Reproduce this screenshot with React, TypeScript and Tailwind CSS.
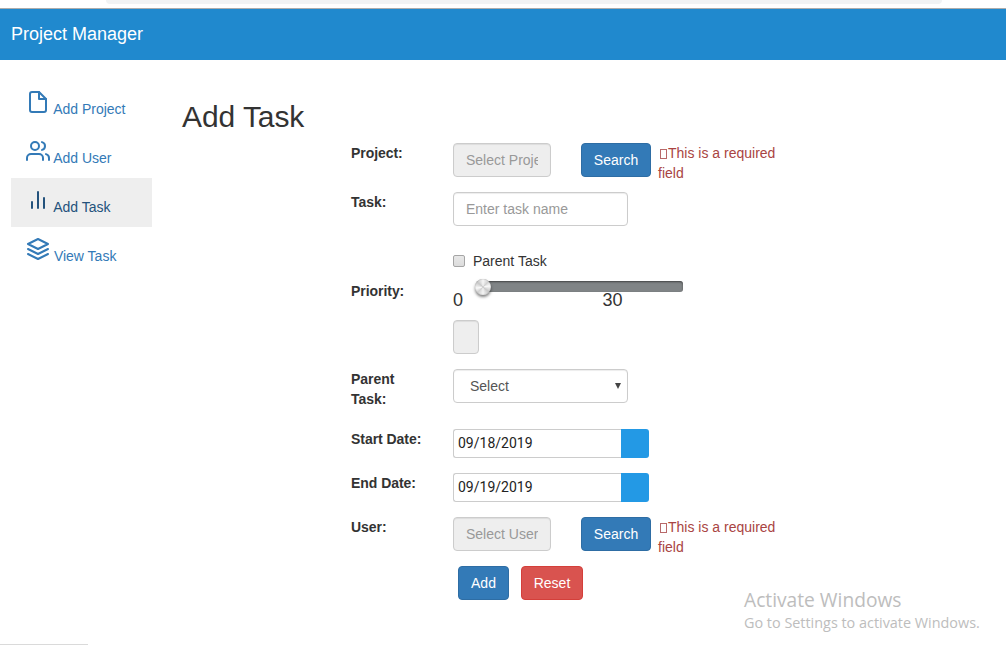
import React from 'react';

const inputBase =
  'block h-[34px] rounded-[4px] border border-[#cccccc] px-3 py-1.5 text-[14px] leading-5 text-[#555555] placeholder:text-[#999999] placeholder:opacity-100 shadow-[inset_0_1px_1px_rgba(0,0,0,0.075)] outline-none';
const buttonBase = 'h-[34px] rounded-[4px] border text-[14px] leading-5 text-white';

function Icon({ children }: { children: React.ReactNode }) {
  return (
    <svg
      className="inline h-6 w-6 align-baseline"
      viewBox="0 0 24 24"
      fill="none"
      stroke="currentColor"
      strokeWidth="2"
      strokeLinecap="round"
      strokeLinejoin="round"
    >
      {children}
    </svg>
  );
}

function NavItem({ icon, label, active }: { icon: React.ReactNode; label: string; active?: boolean }) {
  return (
    <li>
      <a
        className={
          active
            ? 'block h-[49px] bg-[#eeeeee] px-[15px] py-[10px] text-[#23527c]'
            : 'block h-[49px] px-[15px] py-[10px] text-[#337ab7]'
        }
      >
        <Icon>{icon}</Icon> {label}
      </a>
    </li>
  );
}

function Row({ label, className, children }: { label: string; className: string; children: React.ReactNode }) {
  return (
    <div className={`flex items-start ${className}`}>
      <label className="mr-[30px] w-[72px] shrink-0 font-bold tracking-[-0.05px]">{label}</label>
      {children}
    </div>
  );
}

function SearchField({ placeholder }: { placeholder: string }) {
  return (
    <>
      <input disabled placeholder={placeholder} className={`${inputBase} w-[98px] bg-[#eeeeee]`} />
      <button className={`${buttonBase} ml-[30px] w-[70px] border-[#2e6da4] bg-[#337ab7]`}>Search</button>
      <p className="ml-[7px] w-[130px] text-[#a94442]">
        <span className="-mb-px ml-[2px] mr-px inline-block h-[10px] w-[7px] border border-[#b8696a]" />
        This is a required field
      </p>
    </>
  );
}

function DateField({ value }: { value: string }) {
  return (
    <div className="flex h-[29px] w-[196px]">
      <input
        defaultValue={value}
        className="h-[29px] w-[168px] rounded-l-[3px] border border-r-0 border-[#cccccc] px-1 pb-px font-[Roboto,sans-serif] text-[14px] text-[#222222] outline-none"
      />
      <button className="h-[29px] w-7 rounded-r-[3px] bg-[#2399e5]" />
    </div>
  );
}

export default function App() {
  return (
    <div className="relative h-[645px] w-full overflow-hidden bg-white font-['Liberation_Sans',Arial,sans-serif] text-[14px] leading-5 text-[#333333]">
      <div className="h-[9px] border-b border-[#acacac]">
        <div className="ml-[106px] h-1 w-[836px] rounded-b-[12px] bg-[#f1f3f4]" />
      </div>
      <header className="flex h-[51px] items-center bg-[#2089ce] pb-[2px] pl-[11px] text-[18px] text-white">
        Project Manager
      </header>

      <div className="flex">
        <nav className="w-[152px] shrink-0 pl-[11px] pt-5">
          <ul>
            <NavItem
              label="Add Project"
              icon={
                <>
                  <path d="M13 2H6a2 2 0 0 0-2 2v16a2 2 0 0 0 2 2h12a2 2 0 0 0 2-2V9z" />
                  <path d="M13 2v7h7" />
                </>
              }
            />
            <NavItem
              label="Add User"
              icon={
                <>
                  <path d="M17 21v-2a4 4 0 0 0-4-4H5a4 4 0 0 0-4 4v2" />
                  <circle cx="9" cy="7" r="4" />
                  <path d="M23 21v-2a4 4 0 0 0-3-3.87M16 3.13a4 4 0 0 1 0 7.75" />
                </>
              }
            />
            <NavItem active label="Add Task" icon={<path d="M18 20V10M12 20V4M6 20v-6" />} />
            <NavItem
              label="View Task"
              icon={<path d="M12 2 2 7l10 5 10-5zM2 17l10 5 10-5M2 12l10 5 10-5" />}
            />
          </ul>
        </nav>

        <main className="pl-[30px] pt-10">
          <h1 className="h-[33px] text-[30px] leading-[33px] tracking-[-0.07px]">Add Task</h1>
          <form className="pl-[169px] pt-[10px]">
            <Row label="Project:" className="h-[49px]">
              <SearchField placeholder="Select Project" />
            </Row>
            <Row label="Task:" className="h-[59px]">
              <input placeholder="Enter task name" className={`${inputBase} w-[175px]`} />
            </Row>
            <div className="flex h-[30px] pl-[102px]">
              <span className="mr-2 mt-1 h-3 w-3 rounded-[2px] border border-[#a5a5a5] bg-linear-to-b from-[#e8e8e8] to-[#dcdcdc]" />
              Parent Task
            </div>
            <Row label="Priority:" className="h-[88px]">
              <div className="w-[230px]">
                <div className="ml-[24px] h-[11px] w-[206px] rounded-[3px] bg-[#808486] shadow-[inset_0_1px_2px_rgba(0,0,0,0.5)]">
                  <div className="relative -left-[2px] -top-[2px] h-4 w-4 rounded-full bg-[conic-gradient(#f6f6f6,#d2d2d2_45deg,#fafafa_80deg,#c8c8c8_130deg,#f4f4f4_180deg,#d2d2d2_225deg,#fafafa_260deg,#c8c8c8_310deg,#f6f6f6)] shadow-[inset_0_0_1px_rgba(0,0,0,0.45),0_2px_3px_rgba(0,0,0,0.5)]" />
                </div>
                <div className="flex h-[28px] text-[18px] leading-[17px]">
                  <span className="w-[149.5px]">0</span>
                  <span>30</span>
                </div>
                <input disabled className={`${inputBase} w-[26px] bg-[#eeeeee]`} />
              </div>
            </Row>
            <Row label="Parent Task:" className="h-[60px]">
              <div className="flex h-[34px] w-[175px] items-center justify-between rounded-[4px] border border-[#cccccc] pl-4 pr-[6px] text-[#555555] shadow-[inset_0_1px_1px_rgba(0,0,0,0.075)]">
                Select
                <svg className="h-[6px] w-[6px]" viewBox="0 0 6 6">
                  <path d="M0 0h6L3 6z" fill="#444444" />
                </svg>
              </div>
            </Row>
            <Row label="Start Date:" className="h-[44px]">
              <DateField value="09/18/2019" />
            </Row>
            <Row label="End Date:" className="h-[44px]">
              <DateField value="09/19/2019" />
            </Row>
            <Row label="User:" className="h-[49px]">
              <SearchField placeholder="Select User" />
            </Row>
            <div className="flex gap-3 pl-[107px]">
              <button className={`${buttonBase} w-[51px] border-[#2e6da4] bg-[#337ab7]`}>Add</button>
              <button className={`${buttonBase} w-[62px] border-[#d43f3a] bg-[#d9534f]`}>Reset</button>
            </div>
          </form>
        </main>
      </div>

      <div className="absolute left-[744px] top-[588px] whitespace-nowrap font-['Open_Sans',sans-serif] text-[#bdbdbd]">
        <div className="text-[19.2px] leading-6">Activate Windows</div>
        <div className="text-[14.4px] leading-[21px]">Go to Settings to activate Windows.</div>
      </div>
      <div className="absolute bottom-0 left-0 h-px w-[88px] bg-[#dadada]" />
    </div>
  );
}
